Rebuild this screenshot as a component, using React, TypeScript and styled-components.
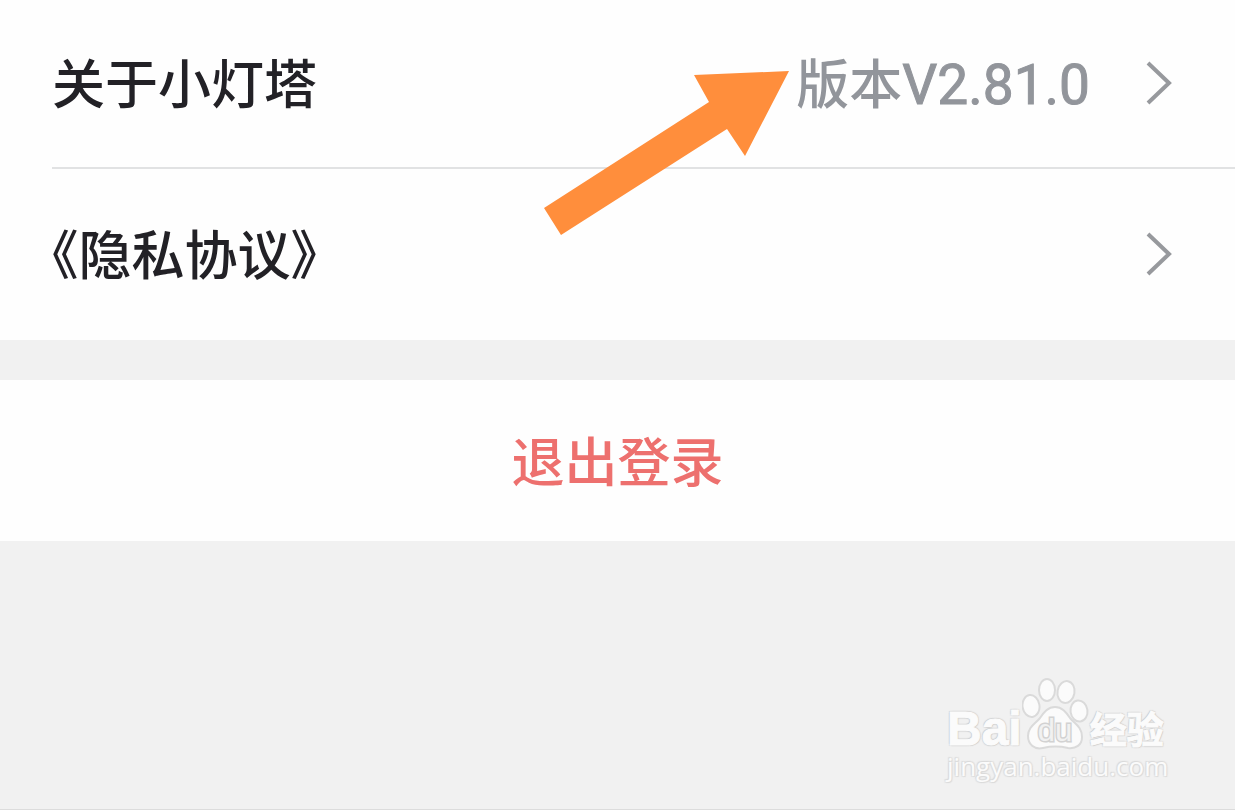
import React from "react";
import styled, { createGlobalStyle } from "styled-components";

const GlobalStyle = createGlobalStyle`
  * { box-sizing: border-box; }
  body {
    margin: 0;
    background: #f1f1f1;
    font-family: "Noto Sans CJK SC", sans-serif;
  }
`;

const Page = styled.div`
  position: relative;
  display: flex;
  flex-direction: column;
  min-height: 100vh;
  border-bottom: 1px solid #dcdcdc;
`;

const Group = styled.nav`
  position: relative;
  background: #fefefe;
  padding-left: 52px;
`;

const Row = styled.a<{ $divided?: boolean }>`
  display: flex;
  align-items: center;
  height: ${(p) => (p.$divided ? 169 : 171)}px;
  padding-right: 63px;
  padding-bottom: 2px;
  border-bottom: ${(p) => (p.$divided ? "2px solid #e1e2e3" : "none")};
  color: #222126;
  font-size: 53px;
  line-height: 80px;
  text-decoration: none;
`;

const Label = styled.span`
  flex: 1;
  padding-bottom: 4px;
  font-weight: 500;
  font-feature-settings: "halt";
`;

const Version = styled.span`
  margin-right: 56px;
  color: #92959b;
  font-weight: 500;
`;

const VersionNumber = styled.span`
  font-family: Roboto, sans-serif;
  font-size: 55px;
  font-weight: 400;
  -webkit-text-stroke: 1px #92959b;
`;

const Chevron = () => (
  <svg width="26" height="44" viewBox="0 0 26 44" fill="none" aria-hidden="true">
    <path d="M2 2L23 22L2 42" stroke="#97999d" strokeWidth="4" />
  </svg>
);

const Arrow = styled.svg`
  position: absolute;
  top: 70px;
  right: 445px;
`;

const LogoutButton = styled.button`
  margin-top: 40px;
  height: 161px;
  padding: 0 0 4px;
  border: 0;
  background: #fefefe;
  color: #ed706e;
  font-family: inherit;
  font-size: 53px;
  font-weight: 500;
  line-height: 80px;
  cursor: pointer;
`;

const Watermark = styled.footer`
  position: absolute;
  right: 66px;
  bottom: 27px;
  width: 222px;
  color: #fbfbfb;
  -webkit-text-stroke: 1px #fbfbfb;
  text-shadow: 1px 1px 1px #cccccc, -1px -1px 1px #cccccc, 1px -1px 1px #d8d8d8, -1px 1px 1px #d8d8d8;
`;

const Brand = styled.div`
  display: flex;
  align-items: flex-end;
  height: 72px;
`;

const BrandLatin = styled.span`
  font: bold 48px/42px "Liberation Sans", sans-serif;
`;

const BrandChinese = styled.span`
  font-size: 37px;
  font-weight: 700;
  line-height: 44px;
`;

const Address = styled.div`
  font: 26px/32px "Open Sans", sans-serif;
  -webkit-text-stroke: 0;
  text-shadow: 1px 1px 1px #dadada, -1px -1px 1px #dadada, 1px -1px 1px #e2e2e2, -1px 1px 1px #e2e2e2;
`;

const Paw = () => (
  <svg width="68" height="72" viewBox="0 0 68 72" aria-hidden="true">
    <g fill="#fbfbfb" stroke="#dadada" strokeWidth="2">
      <ellipse cx="9" cy="28" rx="8.5" ry="11" transform="rotate(-8 9 28)" />
      <ellipse cx="25" cy="12" rx="8" ry="11" />
      <ellipse cx="44" cy="14" rx="8.5" ry="11" transform="rotate(10 44 14)" />
      <ellipse cx="57" cy="33" rx="8.5" ry="10.5" transform="rotate(-8 57 33)" />
      <path d="M33 29C40 29 44 34 48 40C53 46 60 49 60 59C60 67 54 71 46 70C37 68 30 68 21 70C12 72 6 66 6 58C6 49 13 46 18 40C22 34 26 29 33 29Z" />
    </g>
    <text
      x="33"
      y="63"
      textAnchor="middle"
      fill="#f1f1f1"
      stroke="#d2d2d2"
      strokeWidth="3"
      paintOrder="stroke"
      fontFamily="Liberation Sans, sans-serif"
      fontSize="31"
      style={{ textShadow: "none" }}
    >
      du
    </text>
  </svg>
);

export default function App() {
  return (
    <>
      <GlobalStyle />
      <Page>
        <Group>
          <Row href="#about" $divided>
            <Label>关于小灯塔</Label>
            <Version>
              版本<VersionNumber>V2.81.0</VersionNumber>
            </Version>
            <Chevron />
          </Row>
          <Row href="#privacy">
            <Label>《隐私协议》</Label>
            <Chevron />
          </Row>
          <Arrow width="246" height="166" viewBox="0 0 246 166" aria-hidden="true">
            <path d="M0 138L165 32L150 5L245 1L201 86L183 59L17 165Z" fill="#ff8e3c" />
          </Arrow>
        </Group>
        <LogoutButton type="button">退出登录</LogoutButton>
        <Watermark>
          <Brand>
            <BrandLatin>Bai</BrandLatin>
            <Paw />
            <BrandChinese>经验</BrandChinese>
          </Brand>
          <Address>jingyan.baidu.com</Address>
        </Watermark>
      </Page>
    </>
  );
}
